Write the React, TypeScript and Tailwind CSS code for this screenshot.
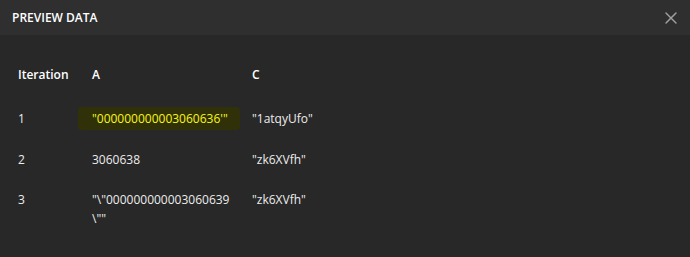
import { X } from 'lucide-react';

const rows = [
  { it: '1', a: '"000000000003060636\'"', c: '"1atqyUfo"', mark: true, h: 'h-[41px]' },
  { it: '2', a: '3060638', c: '"zk6XVfh"', h: 'h-[40px]' },
  { it: '3', a: '"\\"000000000003060639 \\""', c: '"zk6XVfh"', h: 'h-[40px]' },
];

export default function App() {
  return (
    <div className="w-[690px] h-[257px] bg-[#282828] text-[12px] text-[#ececec] font-['Open_Sans',sans-serif] flex flex-col">
      <div className="h-[35px] bg-[#2f2f2f] flex items-center justify-between pl-3 pr-[9px]">
        <span className="text-[12px] font-semibold text-white">PREVIEW DATA</span>
        <X className="w-5 h-5 text-[#a0a0a0]" strokeWidth={1.7} />
      </div>
      <div className="pl-[18px] pt-[30px]">
        <div className="grid grid-cols-[74px_160px_1fr] leading-[19px]">
          <div className="font-semibold text-white h-[44px]">Iteration</div>
          <div className="font-semibold text-white">A</div>
          <div className="font-semibold text-white">C</div>
          {rows.map((r) => (
            <div key={r.it} className="contents">
              <div className={r.h}>{r.it}</div>
              <div className="pr-2">
                {r.mark ? (
                  <span className="bg-[#313109] text-[#f7f712] -ml-[14px] pl-[14px] pr-[12px] py-[3px] rounded-sm whitespace-nowrap">{r.a}</span>
                ) : (
                  r.a
                )}
              </div>
              <div>{r.c}</div>
            </div>
          ))}
        </div>
      </div>
    </div>
  );
}
